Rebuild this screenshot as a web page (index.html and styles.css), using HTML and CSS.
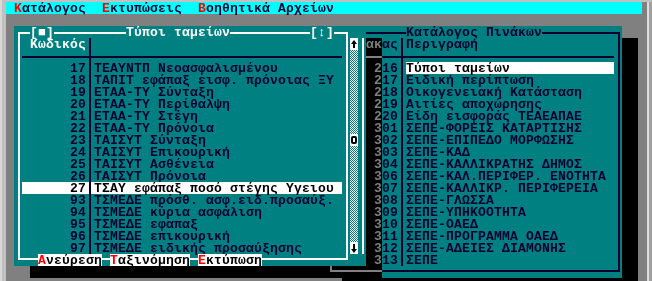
FILE: index.html
```html
<!DOCTYPE html>
<html lang="el">
<head>
<meta charset="utf-8">
<title>Κατάλογος Πινάκων</title>
<link rel="stylesheet" href="styles.css">
</head>
<body>
<div class="console-window">
  <div class="console">
    <div class="menubar">
      <span class="menu"><span class="hk">Κ</span>ατάλογος</span>
      <span class="menu"><span class="hk">Ε</span>κτυπώσεις</span>
      <span class="menu"><span class="hk">Β</span>οηθητικά Αρχείων</span>
    </div>
    <div class="desktop">

      <!-- κατάλογος πινάκων (ανενεργό παράθυρο) -->
      <div class="win win-tables">
        <div class="frame"></div>
        <span class="wtitle tables-title">Κατάλογος Πινάκων</span>
        <div class="list">
          <div class="row head"><span class="code">Πίνακας</span><span class="sep"></span><span class="desc">Περιγραφή</span></div>
          <div class="row rule"><span class="code"></span><span class="sep"></span><span class="desc"></span></div>
          <div class="row"><span class="code">216</span><span class="sep"></span><span class="desc mark">Τύποι ταμείων</span></div>
          <div class="row"><span class="code">217</span><span class="sep"></span><span class="desc">Ειδική περίπτωση</span></div>
          <div class="row"><span class="code">218</span><span class="sep"></span><span class="desc">Οικογενειακή Κατάσταση</span></div>
          <div class="row"><span class="code">219</span><span class="sep"></span><span class="desc">Αιτίες αποχώρησης</span></div>
          <div class="row"><span class="code">220</span><span class="sep"></span><span class="desc">Είδη εισφοράς ΤΕΑΕΑΠΑΕ</span></div>
          <div class="row"><span class="code">301</span><span class="sep"></span><span class="desc">ΣΕΠΕ-ΦΟΡΕΙΣ ΚΑΤΑΡΤΙΣΗΣ</span></div>
          <div class="row"><span class="code">302</span><span class="sep"></span><span class="desc">ΣΕΠΕ-ΕΠΙΠΕΔΟ ΜΟΡΦΩΣΗΣ</span></div>
          <div class="row"><span class="code">303</span><span class="sep"></span><span class="desc">ΣΕΠΕ-ΚΑΔ</span></div>
          <div class="row"><span class="code">304</span><span class="sep"></span><span class="desc">ΣΕΠΕ-ΚΑΛΛΙΚΡΑΤΗΣ ΔΗΜΟΣ</span></div>
          <div class="row"><span class="code">306</span><span class="sep"></span><span class="desc">ΣΕΠΕ-ΚΑΛ.ΠΕΡΙΦΕΡ. ΕΝΟΤΗΤΑ</span></div>
          <div class="row"><span class="code">307</span><span class="sep"></span><span class="desc">ΣΕΠΕ-ΚΑΛΛΙΚΡ. ΠΕΡΙΦΕΡΕΙΑ</span></div>
          <div class="row"><span class="code">308</span><span class="sep"></span><span class="desc">ΣΕΠΕ-ΓΛΩΣΣΑ</span></div>
          <div class="row"><span class="code">309</span><span class="sep"></span><span class="desc">ΣΕΠΕ-ΥΠΗΚΟΟΤΗΤΑ</span></div>
          <div class="row"><span class="code">310</span><span class="sep"></span><span class="desc">ΣΕΠΕ-ΟΑΕΔ</span></div>
          <div class="row"><span class="code">311</span><span class="sep"></span><span class="desc">ΣΕΠΕ-ΠΡΟΓΡΑΜΜΑ ΟΑΕΔ</span></div>
          <div class="row"><span class="code">312</span><span class="sep"></span><span class="desc">ΣΕΠΕ-ΑΔΕΙΕΣ ΔΙΑΜΟΝΗΣ</span></div>
          <div class="row"><span class="code">313</span><span class="sep"></span><span class="desc">ΣΕΠΕ</span></div>
        </div>
      </div>

      <div class="win-shade"></div>

      <!-- τύποι ταμείων (ενεργό παράθυρο) -->
      <div class="win win-funds">
        <div class="frame"></div>
        <span class="wtitle btn-close">[■]</span>
        <span class="wtitle funds-title">Τύποι ταμείων</span>
        <span class="wtitle btn-zoom">[↕]</span>
        <div class="list">
          <div class="row head"><span class="code">Κωδικός</span><span class="sep"></span><span class="desc"></span></div>
          <div class="row rule"><span class="code"></span><span class="sep"></span><span class="desc"></span></div>
          <div class="row"><span class="code">17</span><span class="sep"></span><span class="desc">ΤΕΑΥΝΤΠ Νεοασφαλισμένου</span></div>
          <div class="row"><span class="code">18</span><span class="sep"></span><span class="desc">ΤΑΠΙΤ εφάπαξ εισφ. πρόνοιας ΞΥ</span></div>
          <div class="row"><span class="code">19</span><span class="sep"></span><span class="desc">ΕΤΑΑ-ΤΥ Σύνταξη</span></div>
          <div class="row"><span class="code">20</span><span class="sep"></span><span class="desc">ΕΤΑΑ-ΤΥ Περίθαλψη</span></div>
          <div class="row"><span class="code">21</span><span class="sep"></span><span class="desc">ΕΤΑΑ-ΤΥ Στέγη</span></div>
          <div class="row"><span class="code">22</span><span class="sep"></span><span class="desc">ΕΤΑΑ-ΤΥ Πρόνοια</span></div>
          <div class="row"><span class="code">23</span><span class="sep"></span><span class="desc">ΤΑΙΣΥΤ Σύνταξη</span></div>
          <div class="row"><span class="code">24</span><span class="sep"></span><span class="desc">ΤΑΙΣΥΤ Επικουρική</span></div>
          <div class="row"><span class="code">25</span><span class="sep"></span><span class="desc">ΤΑΙΣΥΤ Ασθένεια</span></div>
          <div class="row"><span class="code">26</span><span class="sep"></span><span class="desc">ΤΑΙΣΥΤ Πρόνοια</span></div>
          <div class="row cur"><span class="code">27</span><span class="sep"></span><span class="desc">ΤΣΑΥ εφάπαξ ποσό στέγης Υγειου</span></div>
          <div class="row"><span class="code">93</span><span class="sep"></span><span class="desc">ΤΣΜΕΔΕ πρόσθ. ασφ.ειδ.προσαύξ.</span></div>
          <div class="row"><span class="code">94</span><span class="sep"></span><span class="desc">ΤΣΜΕΔΕ κύρια ασφάλιση</span></div>
          <div class="row"><span class="code">95</span><span class="sep"></span><span class="desc">ΤΣΜΕΔΕ εφαπαξ</span></div>
          <div class="row"><span class="code">96</span><span class="sep"></span><span class="desc">ΤΣΜΕΔΕ επικουρική</span></div>
          <div class="row"><span class="code">97</span><span class="sep"></span><span class="desc">ΤΣΜΕΔΕ ειδικής προσαύξησης</span></div>
        </div>
        <div class="vbar">
          <span class="arrow"><svg width="8" height="12" viewBox="0 0 8 12"><path d="M4 3v7" stroke="#000" stroke-width="2"/><path d="M1 6l3-4 3 4z" fill="#000"/></svg></span>
          <span class="track track-top"></span>
          <span class="thumb"></span>
          <span class="track"></span>
          <span class="arrow"><svg width="8" height="12" viewBox="0 0 8 12"><path d="M4 2v7" stroke="#000" stroke-width="2"/><path d="M1 7l3 4 3-4z" fill="#000"/></svg></span>
        </div>
        <span class="key key-find"><span class="hk">Α</span>νεύρεση</span>
        <span class="key key-sort"><span class="hk">Τ</span>αξινόμηση</span>
        <span class="key key-print"><span class="hk">Ε</span>κτύπωση</span>
      </div>

    </div>
  </div>
  <div class="chrome-right"></div>
</div>
</body>
</html>
```

FILE: styles.css
```css
html, body {
    margin: 0;
}
body {
    width: 652px;
    height: 281px;
    overflow: hidden;
    background: #c0c0c0;
    font-family: "Liberation Mono", "DejaVu Sans Mono", monospace;
    font-weight: bold;
    font-size: 13px;
    letter-spacing: .2px;
    line-height: 12px;
    color: #000030;
}
.console-window {
    display: flex;
    height: 281px;
    padding-top: 2px;
    box-sizing: border-box;
    border-left: 2px solid #d8d8d8;
}
.console {
    width: 636px;
    margin-left: 4px;
    background: #808080;
    display: flex;
    flex-direction: column;
}
.chrome-right {
    width: 10px;
    background: linear-gradient(90deg, #808080 5px, #dcdcdc 5px 7px, #a0a0a0 7px);
}

.menubar {
    height: 12px;
    flex: none;
    display: flex;
    gap: 16px;
    padding: 1px 0 0 8px;
    box-sizing: border-box;
    background: #00ffff;
    white-space: pre;
}
.hk {
    color: #ff0000;
}

.desktop {
    position: relative;
    flex: 1;
}

/* παράθυρα */
.win {
    position: absolute;
    top: 12px;
    display: grid;
    background: #008080;
}
.win-funds {
    left: 8px;
    grid-template-columns: repeat(44, 8px);
    grid-template-rows: repeat(20, 12px);
}
.win-tables {
    left: 320px;
    grid-template-columns: repeat(37, 8px);
    grid-template-rows: repeat(21, 12px);
    box-shadow: 16px 12px 0 #000;
}
.win-shade {
    position: absolute;
    left: 24px;
    top: 24px;
    width: 352px;
    height: 240px;
    backdrop-filter: grayscale(1) invert(1) brightness(.507) contrast(2.588);
}

.frame {
    grid-row: 1 / -1;
    grid-column: 1 / span 42;
    margin: 6px 2px 6px 4px;
    border: 2px solid #fff;
}
.win-tables .frame {
    grid-column: 1 / -1;
    border-color: #000030;
}

.wtitle {
    grid-row: 1;
    height: 12px;
    padding-top: 1px;
    box-sizing: border-box;
    background: #008080;
    color: #fff;
    white-space: pre;
}
.btn-close { grid-column: 3 / span 3; }
.funds-title { grid-column: 15 / span 13; }
.btn-zoom { grid-column: 38 / span 3; }
.tables-title {
    grid-column: 11 / span 17;
    color: #000030;
}

/* λίστες */
.list {
    display: flex;
    flex-direction: column;
}
.win-funds .list {
    grid-column: 2 / span 40;
    grid-row: 2 / span 18;
}
.win-tables .list {
    grid-column: 2 / span 35;
    grid-row: 2 / span 19;
}
.row {
    display: flex;
    height: 12px;
    white-space: pre;
}
.row > span {
    padding-top: 1px;
    box-sizing: border-box;
}
.code {
    flex: none;
    width: 64px;
    text-align: right;
}
.sep {
    flex: none;
    width: 8px;
    background: linear-gradient(90deg, transparent 3px, #000030 3px 5px, transparent 5px);
}
.desc {
    flex: 1;
    min-width: 0;
}
.rule .code, .rule .desc {
    background: linear-gradient(transparent 6px, #000030 6px 8px, transparent 8px);
}
.rule .sep {
    background:
        linear-gradient(90deg, transparent 3px, #000030 3px 5px, transparent 5px),
        linear-gradient(transparent 6px, #000030 6px 8px, transparent 8px);
}
.win-funds .head .code {
    color: #fff;
}
.cur, .mark {
    background-color: #fff;
    color: #000;
}

/* μπάρα κύλισης */
.vbar {
    grid-column: 43 / span 2;
    grid-row: 2 / span 18;
    display: flex;
    flex-direction: column;
    margin-right: 2px;
    border-right: 2px solid #fff;
}
.vbar > span {
    width: 8px;
}
.arrow {
    height: 12px;
    background: #fff;
    display: flex;
}
.track {
    flex: 1;
    background: repeating-conic-gradient(#fff 0 25%, #008080 0 50%) 0 0 / 2px 2px;
}
.track-top {
    flex: none;
    height: 84px;
}
.thumb {
    height: 12px;
    background: #fff;
    display: flex;
    align-items: center;
    justify-content: center;
}
.thumb::before {
    content: "";
    width: 2px;
    height: 4px;
    border: 2px solid #000;
    border-radius: 2px;
}

/* πλήκτρα κάτω */
.key {
    grid-row: 20;
    height: 12px;
    padding-top: 1px;
    box-sizing: border-box;
    background: #fff;
    color: #000;
    white-space: pre;
}
.key-find { grid-column: 4 / span 8; }
.key-sort { grid-column: 13 / span 10; }
.key-print { grid-column: 24 / span 8; }
```
